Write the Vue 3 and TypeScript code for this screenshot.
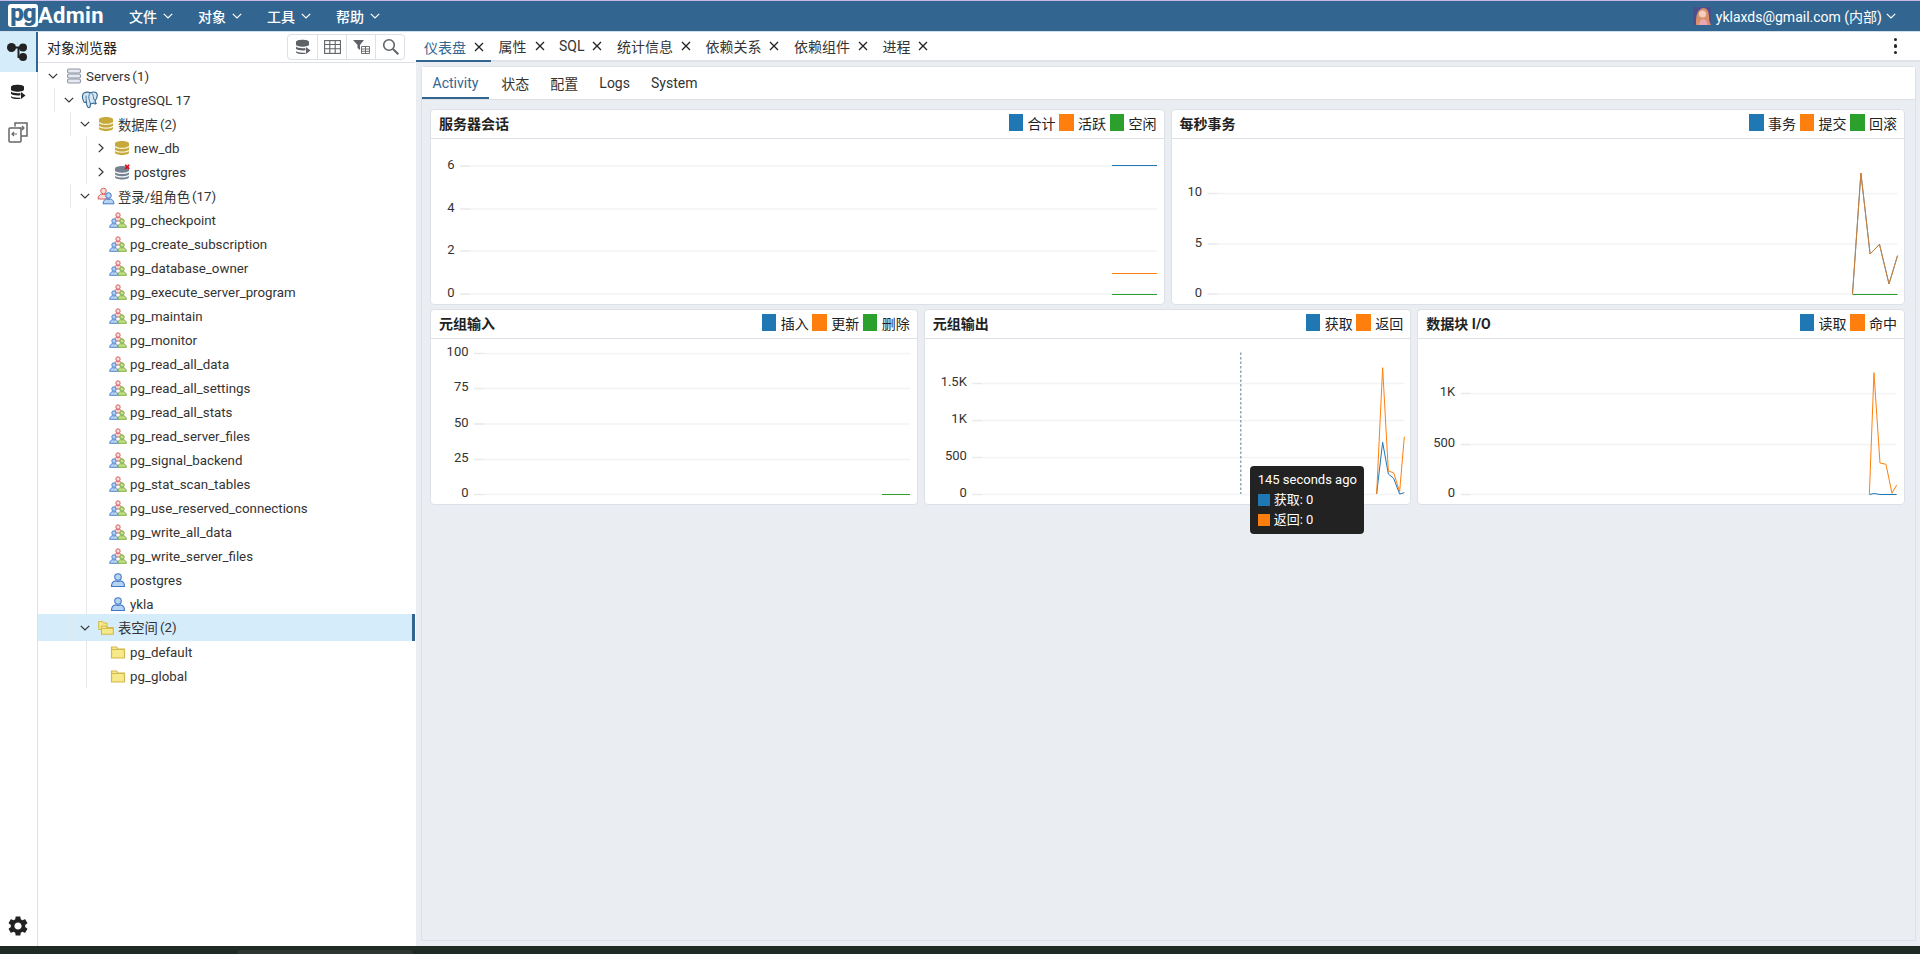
<script setup lang="ts">
interface TreeRow {
  label: string
  count?: number
  depth: number
  icon: string
  open?: boolean
  leaf?: boolean
  selected?: boolean
}

interface Series {
  color: string
  opacity?: number
  points: string
}

interface Chart {
  title: string
  x0: number
  y0: number
  width: number
  axisX: number
  right: number
  legend: { label: string; color: string }[]
  ticks: { label: string; y: number }[]
  series: Series[]
}

const BLUE = '#1f77b4'
const ORANGE = '#ff7f0e'
const GREEN = '#2ca02c'

const roleNames = [
  'pg_checkpoint',
  'pg_create_subscription',
  'pg_database_owner',
  'pg_execute_server_program',
  'pg_maintain',
  'pg_monitor',
  'pg_read_all_data',
  'pg_read_all_settings',
  'pg_read_all_stats',
  'pg_read_server_files',
  'pg_signal_backend',
  'pg_stat_scan_tables',
  'pg_use_reserved_connections',
  'pg_write_all_data',
  'pg_write_server_files',
]

const rows: TreeRow[] = [
  { label: 'Servers', count: 1, depth: 0, icon: 'i-servers', open: true },
  { label: 'PostgreSQL 17', depth: 1, icon: 'i-pg', open: true },
  { label: '数据库', count: 2, depth: 2, icon: 'i-db', open: true },
  { label: 'new_db', depth: 3, icon: 'i-db' },
  { label: 'postgres', depth: 3, icon: 'i-db-off' },
  { label: '登录/组角色', count: 17, depth: 2, icon: 'i-roles', open: true },
  ...roleNames.map((label) => ({ label, depth: 3, icon: 'i-group', leaf: true })),
  { label: 'postgres', depth: 3, icon: 'i-user', leaf: true },
  { label: 'ykla', depth: 3, icon: 'i-user', leaf: true },
  { label: '表空间', count: 2, depth: 2, icon: 'i-folders', open: true, selected: true },
  { label: 'pg_default', depth: 3, icon: 'i-folder', leaf: true },
  { label: 'pg_global', depth: 3, icon: 'i-folder', leaf: true },
]

const wideIcons = ['i-pg', 'i-roles', 'i-group']

const menus = ['文件', '对象', '工具', '帮助']
const tabs = ['仪表盘', '属性', 'SQL', '统计信息', '依赖关系', '依赖组件', '进程']
const subTabs = ['Activity', '状态', '配置', 'Logs', 'System']

const topCharts: Chart[] = [
  {
    title: '服务器会话',
    x0: 431,
    y0: 139,
    width: 732.5,
    axisX: 460,
    right: 1157,
    legend: [
      { label: '合计', color: BLUE },
      { label: '活跃', color: ORANGE },
      { label: '空闲', color: GREEN },
    ],
    ticks: [
      { label: '6', y: 166 },
      { label: '4', y: 209 },
      { label: '2', y: 251 },
      { label: '0', y: 294 },
    ],
    series: [
      { color: BLUE, points: '1112,165.5 1157,165.5' },
      { color: ORANGE, points: '1112,273.5 1157,273.5' },
      { color: GREEN, points: '1112,294.5 1157,294.5' },
    ],
  },
  {
    title: '每秒事务',
    x0: 1171.5,
    y0: 139,
    width: 732.5,
    axisX: 1207,
    right: 1897,
    legend: [
      { label: '事务', color: BLUE },
      { label: '提交', color: ORANGE },
      { label: '回滚', color: GREEN },
    ],
    ticks: [
      { label: '10', y: 193.5 },
      { label: '5', y: 244 },
      { label: '0', y: 294 },
    ],
    series: [
      { color: BLUE, points: '1852,294 1860.4,173 1869.6,254 1879,244.3 1888.5,284 1897,255.7' },
      { color: ORANGE, opacity: 0.8, points: '1852,294 1860.4,173 1869.6,254 1879,244.3 1888.5,284 1897,255.7' },
      { color: GREEN, points: '1852,294.5 1897,294.5' },
    ],
  },
]

const bottomCharts: Chart[] = [
  {
    title: '元组输入',
    x0: 431,
    y0: 339,
    width: 485.67,
    axisX: 474,
    right: 910,
    legend: [
      { label: '插入', color: BLUE },
      { label: '更新', color: ORANGE },
      { label: '删除', color: GREEN },
    ],
    ticks: [
      { label: '100', y: 353.5 },
      { label: '75', y: 388.5 },
      { label: '50', y: 424 },
      { label: '25', y: 459.5 },
      { label: '0', y: 494.5 },
    ],
    series: [{ color: GREEN, points: '882,494.5 910,494.5' }],
  },
  {
    title: '元组输出',
    x0: 924.67,
    y0: 339,
    width: 485.67,
    axisX: 972,
    right: 1404,
    legend: [
      { label: '获取', color: BLUE },
      { label: '返回', color: ORANGE },
    ],
    ticks: [
      { label: '1.5K', y: 383.5 },
      { label: '1K', y: 420.5 },
      { label: '500', y: 457.5 },
      { label: '0', y: 494.5 },
    ],
    series: [
      { color: BLUE, points: '1376.3,494 1382.3,442.3 1388,474 1393.3,478.3 1399.3,494 1404,492.7' },
      { color: ORANGE, points: '1376.3,494 1382.3,367.7 1388,471 1393.3,472.7 1399.3,491.7 1404,436.7' },
    ],
  },
  {
    title: '数据块 I/O',
    x0: 1418.33,
    y0: 339,
    width: 485.67,
    axisX: 1461,
    right: 1897,
    legend: [
      { label: '读取', color: BLUE },
      { label: '命中', color: ORANGE },
    ],
    ticks: [
      { label: '1K', y: 393.5 },
      { label: '500', y: 444.5 },
      { label: '0', y: 494.5 },
    ],
    series: [
      { color: ORANGE, points: '1869.7,494 1874.3,372.7 1880.3,463 1886.3,464.3 1892.3,493.3 1897,485' },
      { color: BLUE, points: '1869.7,494.5 1874.3,493.5 1880.3,494.5 1897,494.5' },
    ],
  },
]

const chartGroups = [topCharts, bottomCharts]
</script>

<template>
  <div class="app">
    <svg class="sprite" aria-hidden="true">
      <defs>
        <symbol id="i-servers" viewBox="0 0 16 16">
          <g fill="#e6e9ef" stroke="#8d95a3" stroke-width="1.1">
            <rect x="1.5" y="1" width="13" height="4" rx="1.6" />
            <rect x="1.5" y="6" width="13" height="4" rx="1.6" />
            <rect x="1.5" y="11" width="13" height="4" rx="1.6" />
          </g>
        </symbol>
        <symbol id="i-pg" viewBox="0 0 16 16">
          <path d="M3 1.5C.8 2.5.8 6.5 2.5 9.5c.7 1.2 1.5.8 2.2 0 .2 2 .6 4.8 2 5.2 1.5.4 1.7-1.7 1.7-3.5 1 .3 2 .1 2.9-.6.6 1 1.5 1 2.2.5-.6-.8-1-1.3-1-2.2 1.9-2.9 2.9-5.5 1.1-7.3C12 .5 9.8 1 8.5 1.5 7 1 4.5.8 3 1.5z" fill="#d7e8f5" stroke="#336791" stroke-width="1" stroke-linejoin="round" />
          <path d="M8.500 1.500C6.800 3 6.500 6 7.500 8.500c.4 1 .6 2 .9 2.700M4.700 9.500c.3-2-.6-3.800-.3-5.500M12.500 8.500c-1-.5-1.500-2-1.500-3.500 0-1-.5-2-1.500-3" fill="none" stroke="#336791" stroke-width=".8" />
        </symbol>
        <symbol id="i-db" viewBox="0 0 16 16">
          <path d="M1 3.500C1 2 4 1 8 1s7 1 7 2.500v9C15 14 12 15 8 15s-7-1-7-2.500z" fill="#c6a93c" />
          <path d="M1 6.300c1 1.300 3.800 2 7 2s6-.7 7-2M1 10.200c1 1.300 3.800 2 7 2s6-.7 7-2" fill="none" stroke="#f8f4dc" stroke-width="1.300" />
        </symbol>
        <symbol id="i-db-off" viewBox="0 0 16 16">
          <path d="M1 4.500C1 3 4 2 8 2s7 1 7 2.500v8.500C15 14.500 12 15.500 8 15.500S1 14.500 1 13z" fill="#76828f" />
          <path d="M1 7.500c1 1.200 3.800 1.900 7 1.900s6-.7 7-1.900M1 11c1 1.200 3.800 1.900 7 1.900s6-.7 7-1.900" fill="none" stroke="#f1f3f5" stroke-width="1.300" />
          <path d="M11.200 .8l4 4M15.200 .8l-4 4" stroke="#d8121e" stroke-width="1.800" />
        </symbol>
        <symbol id="i-user" viewBox="0 0 16 16">
          <g fill="#b7d3f2" stroke="#3f78c9" stroke-width="1.100">
            <circle cx="8" cy="5" r="3.300" />
            <path d="M1.500 14.500c0-3.600 2.500-5.300 4-5.600.8.600 4.200.6 5 0 1.500.3 4 2 4 5.600z" />
          </g>
        </symbol>
        <symbol id="i-roles" viewBox="0 0 18 18">
          <g fill="#f7dede" stroke="#d9615c" stroke-width="1">
            <circle cx="6.500" cy="4" r="2.800" />
            <path d="M1 12c0-3 2-4.500 3.300-4.800.7.500 3.700.5 4.400 0C10 7.500 12 9 12 12z" />
          </g>
          <g fill="#b7d3f2" stroke="#3f78c9" stroke-width="1">
            <circle cx="11.500" cy="8.500" r="2.800" />
            <path d="M6 16.800c0-3 2-4.500 3.300-4.800.7.500 3.700.5 4.400 0 1.300.3 3.300 1.800 3.300 4.800z" />
          </g>
        </symbol>
        <symbol id="i-group" viewBox="0 0 18 16">
          <g fill="#f7dede" stroke="#d9514c" stroke-width=".9">
            <circle cx="9" cy="3" r="2.200" />
            <path d="M5 9c0-2 1.300-3.300 2.400-3.500.6.400 2.600.4 3.200 0C11.700 5.700 13 7 13 9z" />
          </g>
          <g fill="#b7d3f2" stroke="#3f78c9" stroke-width=".9">
            <circle cx="5" cy="9" r="2.200" />
            <path d="M.7 15.300c0-2 1.500-3.400 2.700-3.600.6.400 2.600.4 3.200 0 1.200.2 2.700 1.600 2.700 3.600z" />
          </g>
          <g fill="#c4e08a" stroke="#6fa52c" stroke-width=".9">
            <circle cx="13" cy="9" r="2.200" />
            <path d="M8.700 15.300c0-2 1.500-3.400 2.700-3.600.6.400 2.600.4 3.200 0 1.200.2 2.700 1.600 2.700 3.600z" />
          </g>
        </symbol>
        <symbol id="i-folder" viewBox="0 0 16 16">
          <path d="M1.500 3h5l1.500 2h6.500v9h-13z" fill="#f6e98a" stroke="#d3b84a" stroke-width="1.200" stroke-linejoin="round" />
          <path d="M1.500 5.500h13" stroke="#d3b84a" stroke-width="1" />
        </symbol>
        <symbol id="i-folders" viewBox="0 0 16 16">
          <path d="M.7 1.500h3.800l1 1.500h3.500v6.500H.7z" fill="#f6e98a" stroke="#d3b84a" stroke-width="1" stroke-linejoin="round" />
          <path d="M3.500 6h4.200l1 1.500h6.600v6.800H3.500z" fill="#f6e98a" stroke="#d3b84a" stroke-width="1.100" stroke-linejoin="round" />
          <path d="M3.500 8.500h11.800" stroke="#d3b84a" stroke-width=".9" />
        </symbol>
        <symbol id="i-chevron" viewBox="0 0 10 10">
          <path d="M.8 2.800L5 7l4.200-4.200" fill="none" stroke="currentColor" stroke-width="1.200" />
        </symbol>
        <symbol id="i-close" viewBox="0 0 10 10">
          <path d="M1 1l8 8M9 1l-8 8" fill="none" stroke="currentColor" stroke-width="1.300" />
        </symbol>
        <symbol id="i-db-query" viewBox="0 0 16 16">
          <path d="M1 3C1 1.700 4 .8 7.500 .8S14 1.700 14 3v2.500C14 6.800 11 7.700 7.500 7.700S1 6.800 1 5.500z" />
          <path d="M1 7.500c.8 1 3.500 1.700 6.500 1.700 1 0 2-.1 2.900-.2v2.300c-1 .2-1.900.2-2.900.2-3 0-5.700-.7-6.500-1.700z" />
          <path d="M1 12c.8 1 3.500 1.700 6.500 1.700h2.900v1.200c-1 .2-1.900.2-2.900.2-3.500 0-6.500-1-6.500-2.200z" />
          <path d="M11 8l4.500 3.500L11 15z" />
        </symbol>
      </defs>
    </svg>

    <header class="navbar">
      <div class="logo"><span class="logo-pg">pg</span><span class="logo-admin">Admin</span></div>
      <nav class="menus">
        <span v-for="m in menus" :key="m" class="menu">
          {{ m }}
          <svg class="menu-chevron"><use href="#i-chevron" /></svg>
        </span>
      </nav>
      <div class="user">
        <svg class="avatar" viewBox="0 0 18 18">
          <rect width="18" height="18" fill="#4b4f8c" />
          <path d="M3 18c0-7 0-15 7-17 5 0 6 5 6 9s1 6 2 8z" fill="#d98f6a" />
          <circle cx="9.500" cy="7" r="3.600" fill="#f4cdbd" />
          <path d="M6 18c.5-4 2-6 4-6s4 2 4.500 6z" fill="#e9a6b4" />
        </svg>
        <span>yklaxds@gmail.com (内部)</span>
        <svg class="menu-chevron"><use href="#i-chevron" /></svg>
      </div>
    </header>

    <div class="workspace">
      <aside class="sidebar">
        <button class="side-btn active" type="button">
          <svg width="20" height="18" viewBox="0 0 20 18" fill="#222">
            <circle cx="4.500" cy="4.500" r="4.500" />
            <circle cx="16" cy="4.500" r="4" />
            <circle cx="16" cy="14" r="4" />
            <path d="M4 3.500h12v2h-3.500v7.500H16v2h-5.500v-9.500H4z" />
          </svg>
        </button>
        <button class="side-btn" type="button">
          <svg width="16" height="16" fill="#222"><use href="#i-db-query" /></svg>
        </button>
        <button class="side-btn" type="button">
          <svg width="20" height="22" viewBox="0 0 20 22" fill="none" stroke="#666" stroke-width="1.500">
            <path d="M7 5.500V2h12v13h-6" />
            <rect x="1" y="7" width="12" height="14" rx="1" />
            <path d="M9 13H4m2-2l-2 2 2 2M11 7h5m-2-2l2 2-2 2" stroke-width="1.200" />
          </svg>
        </button>
        <svg class="gear" viewBox="0 0 24 24" fill="#222">
          <path d="M19.140 12.940c.04-.3.06-.61.06-.94 0-.32-.02-.64-.07-.94l2.030-1.580c.18-.14.23-.41.12-.61l-1.920-3.320c-.12-.22-.37-.29-.59-.22l-2.390.96c-.5-.38-1.030-.7-1.620-.94l-.36-2.540c-.04-.24-.24-.41-.48-.41h-3.840c-.24 0-.43.17-.47.41l-.36 2.540c-.59.24-1.130.57-1.620.94l-2.390-.96c-.22-.08-.47 0-.59.22L2.740 8.870c-.12.21-.08.47.12.61l2.030 1.580c-.05.3-.09.63-.09.94s.02.64.07.94l-2.030 1.580c-.18.14-.23.41-.12.61l1.920 3.320c.12.22.37.29.59.22l2.390-.96c.5.38 1.030.7 1.620.94l.36 2.540c.05.24.24.41.48.41h3.840c.24 0 .44-.17.47-.41l.36-2.540c.59-.24 1.130-.56 1.620-.94l2.390.96c.22.08.47 0 .59-.22l1.920-3.320c.12-.22.07-.47-.12-.61l-2.010-1.580zM12 15.600c-1.980 0-3.600-1.620-3.600-3.600s1.620-3.600 3.600-3.600 3.600 1.620 3.600 3.600-1.620 3.600-3.600 3.600z" />
        </svg>
      </aside>

      <section class="explorer">
        <div class="explorer-head">
          <span>对象浏览器</span>
          <div class="tool-group">
            <button class="tool" type="button">
              <svg width="16" height="16" fill="#5f6368"><use href="#i-db-query" /></svg>
            </button>
            <button class="tool" type="button">
              <svg width="17" height="14" viewBox="0 0 17 14" fill="none" stroke="#5f6368" stroke-width="1.100">
                <rect x=".6" y=".6" width="15.800" height="12.800" />
                <path d="M.6 4.500h15.800M.6 8.800h15.800M5.800.6v12.800M11.200.6v12.800" />
              </svg>
            </button>
            <button class="tool" type="button">
              <svg width="17" height="14" viewBox="0 0 17 14">
                <path d="M0 0h11L7 5v5L4.500 8V5z" fill="#5f6368" />
                <path d="M8.500 6.500H16.500V13.500H8.500zM8.500 9h8M8.500 11.300h8M12.500 6.500v7" fill="none" stroke="#5f6368" stroke-width=".9" />
              </svg>
            </button>
            <button class="tool" type="button">
              <svg width="17" height="17" viewBox="0 0 17 17" fill="none" stroke="#5f6368" stroke-width="1.600">
                <circle cx="7" cy="7" r="5.300" />
                <path d="M11 11l5.300 5.300" stroke-width="2" />
              </svg>
            </button>
          </div>
        </div>
        <div class="tree">
          <div
            v-for="(row, i) in rows"
            :key="i"
            class="tree-row"
            :class="{ selected: row.selected }"
            :style="{ paddingLeft: 8 + row.depth * 16 + 'px' }"
          >
            <span v-if="row.depth" class="guide" :style="{ left: row.depth * 16 + 'px' }"></span>
            <span class="toggle" :class="{ leaf: row.leaf }">
              <svg v-if="!row.leaf" class="chevron" :class="{ closed: !row.open }"><use href="#i-chevron" /></svg>
            </span>
            <svg class="tree-icon" :class="{ wide: wideIcons.includes(row.icon) }"><use :href="'#' + row.icon" /></svg>
            <span class="tree-label">{{ row.label }}</span>
            <span v-if="row.count !== undefined" class="tree-count">({{ row.count }})</span>
          </div>
        </div>
      </section>

      <main class="content">
        <div class="tabbar">
          <div v-for="(t, i) in tabs" :key="t" class="tab" :class="{ active: i === 0 }">
            <span>{{ t }}</span>
            <svg class="tab-close"><use href="#i-close" /></svg>
          </div>
          <div class="kebab"><i></i><i></i><i></i></div>
        </div>
        <div class="pane">
          <div class="panel">
            <div class="subtabs">
              <span v-for="(t, i) in subTabs" :key="t" class="subtab" :class="{ active: i === 0 }">{{ t }}</span>
            </div>
            <div class="dashboard">
              <div v-for="(group, g) in chartGroups" :key="g" class="chart-row">
                <div v-for="c in group" :key="c.title" class="card">
                  <div class="card-head">
                    <span class="card-title">{{ c.title }}</span>
                    <div class="legend">
                      <template v-for="l in c.legend" :key="l.label">
                        <i class="swatch" :style="{ background: l.color }"></i>
                        <span class="legend-label">{{ l.label }}</span>
                      </template>
                    </div>
                  </div>
                  <svg class="plot" :viewBox="`${c.x0} ${c.y0} ${c.width} 165`" preserveAspectRatio="xMinYMin">
                    <template v-for="t in c.ticks" :key="t.label">
                      <text class="axis-label" :x="c.axisX - 5.5" :y="t.y + 2.5" text-anchor="end">{{ t.label }}</text>
                      <line :x1="c.axisX" :x2="c.axisX + 10" :y1="t.y" :y2="t.y" stroke="#e8e9eb" stroke-width="1.5" />
                      <line :x1="c.axisX + 10" :x2="c.right" :y1="t.y" :y2="t.y" stroke="#f2f3f5" stroke-width="1.5" />
                    </template>
                    <polyline
                      v-for="(s, si) in c.series"
                      :key="si"
                      :points="s.points"
                      fill="none"
                      :stroke="s.color"
                      :stroke-opacity="s.opacity ?? 1"
                      stroke-width="1"
                    />
                    <line
                      v-if="c.title === '元组输出'"
                      x1="1240.5"
                      x2="1240.5"
                      y1="352.5"
                      y2="494"
                      stroke="#607d8b"
                      stroke-dasharray="2.5 2"
                    />
                  </svg>
                  <div v-if="c.title === '元组输出'" class="tooltip">
                    <div>145 seconds ago</div>
                    <div class="tip-row"><i class="tip-swatch blue"></i>获取: 0</div>
                    <div class="tip-row"><i class="tip-swatch orange"></i>返回: 0</div>
                  </div>
                </div>
              </div>
            </div>
          </div>
        </div>
      </main>
    </div>
    <footer class="taskbar"><span class="task-pill"></span></footer>
  </div>
</template>

<style>
html,
body {
  margin: 0;
  overflow: hidden;
}
</style>

<style scoped>
.app {
  display: flex;
  flex-direction: column;
  height: 954px;
  font-family: Roboto, "Noto Sans CJK SC", sans-serif;
  font-size: 14px;
  color: #222;
  background: #fff;
}

.sprite {
  position: absolute;
  width: 0;
  height: 0;
}

.navbar {
  display: flex;
  align-items: center;
  flex: 0 0 32px;
  box-sizing: border-box;
  height: 32px;
  padding: 0 24px 1px 8px;
  border-top: 1px solid #c7b8e6;
  border-bottom: 1px solid #cfe0ec;
  background: #326690;
  color: #fff;
}

.logo {
  display: flex;
  align-items: center;
  width: 121px;
  font-weight: 700;
}

.logo-pg {
  width: 30px;
  height: 23px;
  border-radius: 3px;
  background: #fff;
  color: #326690;
  font-size: 24px;
  font-weight: 900;
  line-height: 19px;
  letter-spacing: -1px;
  text-align: center;
}

.logo-admin {
  font-size: 22px;
  letter-spacing: .3px;
}

.menus {
  display: flex;
}

.menu {
  display: flex;
  align-items: center;
  gap: 6px;
  width: 69px;
  font-weight: 500;
}

.menu-chevron {
  width: 10px;
  height: 10px;
  color: #fff;
}

.user {
  display: flex;
  align-items: center;
  margin-left: auto;
  gap: 4px;
}

.avatar {
  width: 18px;
  height: 18px;
  margin-right: 1px;
}

.workspace {
  display: flex;
  flex: 1;
  min-height: 0;
}

.sidebar {
  display: flex;
  flex: 0 0 38px;
  flex-direction: column;
  box-sizing: border-box;
  border-right: 1px solid #dde0e6;
}

.side-btn {
  display: flex;
  align-items: center;
  justify-content: center;
  height: 40px;
  padding: 0 2px 0 0;
  border: 0;
  background: none;
}

.side-btn.active {
  border-right: 2px solid #326690;
  margin-right: -1px;
  background: #d5ecfa;
}

.gear {
  width: 24px;
  height: 24px;
  margin: auto 0 8px 6px;
}

.explorer {
  display: flex;
  flex: 0 0 377px;
  flex-direction: column;
  min-width: 0;
}

.explorer-head {
  display: flex;
  align-items: center;
  justify-content: space-between;
  box-sizing: border-box;
  height: 31px;
  padding: 0 10px 1px 9px;
  border-bottom: 1px solid #dde0e6;
}

.tool-group {
  display: flex;
  height: 24px;
  border: 1px solid #dde0e6;
  border-radius: 4px;
}

.tool {
  display: flex;
  align-items: center;
  justify-content: center;
  width: 29px;
  padding: 0;
  border: 0;
  border-left: 1px solid #dde0e6;
  background: none;
}

.tool:first-child {
  border-left: 0;
}

.tree {
  padding-top: 1px;
  color: #333;
  font-size: 13.3px;
}

.tree-row {
  position: relative;
  display: flex;
  align-items: center;
  height: 24px;
}

.tree-row.selected {
  height: 27px;
  margin: -2px 0 -1px;
  box-sizing: border-box;
  border-right: 3px solid #326690;
  background: #d5ecfa;
}

.guide {
  position: absolute;
  top: 0;
  bottom: 0;
  width: 1px;
  background: #e4e6ea;
}

.toggle {
  display: flex;
  flex: 0 0 20px;
}

.toggle.leaf {
  flex-basis: 16px;
}

.chevron {
  width: 10px;
  height: 10px;
  margin-left: 2px;
  color: #333;
}

.chevron.closed {
  transform: rotate(-90deg);
}

.tree-icon {
  flex: 0 0 16px;
  width: 16px;
  height: 16px;
  margin-right: 4px;
  overflow: visible;
}

.tree-icon.wide {
  flex-basis: 18px;
  width: 18px;
  height: 18px;
  margin: 0 3px 0 -1px;
}

.tree-count {
  margin-left: 2px;
}

.content {
  display: flex;
  flex: 1;
  flex-direction: column;
  min-width: 0;
  margin-left: 1px;
  background: #eaedf2;
}

.tabbar {
  display: flex;
  flex: 0 0 30px;
  align-items: stretch;
  box-sizing: border-box;
  background: #fff;
  border-bottom: 2px solid #dfe3e8;
}

.tab {
  display: flex;
  align-items: center;
  gap: 8px;
  padding: 0 6.5px 0 8px;
  color: #333;
}

.tab.active {
  box-shadow: inset 0 -2px 0 #326690;
  margin-bottom: -2px;
  color: #326690;
}

.tab-close {
  width: 10px;
  height: 10px;
  color: #222;
}

.kebab {
  display: flex;
  flex-direction: column;
  align-items: center;
  justify-content: center;
  gap: 3px;
  margin-left: auto;
  padding-right: 23px;
}

.kebab i {
  width: 3.5px;
  height: 3.5px;
  border-radius: 50%;
  background: #222;
}

.pane {
  display: flex;
  flex: 1;
  min-height: 0;
  padding: 4px 4px 5px 5px;
}

.panel {
  display: flex;
  flex: 1;
  flex-direction: column;
  min-width: 0;
  border: 1px solid #dde0e6;
  border-radius: 4px 4px 0 0;
}

.subtabs {
  display: flex;
  flex: 0 0 32px;
  box-sizing: border-box;
  background: #fff;
  border-bottom: 1px solid #dde0e6;
}

.subtab {
  display: flex;
  align-items: center;
  padding: 0 10.5px;
  color: #333;
}

.subtab.active {
  box-sizing: border-box;
  height: 32px;
  margin-right: 2px;
  box-shadow: inset 0 -2px 0 #326690;
  color: #326690;
}

.dashboard {
  display: flex;
  flex-direction: column;
  gap: 4px;
  padding: 9px 10px 0 8px;
}

.chart-row {
  display: flex;
  gap: 6px;
}

.card {
  position: relative;
  flex: 1 1 0;
  box-sizing: border-box;
  min-width: 0;
  height: 196px;
  border: 1px solid #dde0e6;
  border-radius: 4px;
  background: #fff;
}

.card-head {
  display: flex;
  align-items: center;
  justify-content: space-between;
  box-sizing: border-box;
  height: 29px;
  padding: 0 7px 3px 8px;
  border-bottom: 1px solid #dde0e6;
}

.card-title {
  font-weight: 700;
}

.legend {
  display: flex;
  align-items: center;
}

.swatch {
  width: 14.5px;
  height: 17px;
  margin-right: 4.5px;
}

.legend-label {
  margin-right: 3.5px;
}

.legend-label:last-child {
  margin-right: 0;
}

.plot {
  display: block;
  width: 100%;
  height: 165px;
  overflow: visible;
}

.axis-label {
  font-size: 13px;
  fill: #333;
}

.tooltip {
  position: absolute;
  z-index: 2;
  top: 156px;
  left: 325px;
  box-sizing: border-box;
  width: 114px;
  height: 68px;
  padding: 4px 8px;
  border-radius: 4px;
  background: #222;
  color: #fff;
  font-size: 13px;
  line-height: 20px;
  white-space: nowrap;
}

.tip-row {
  display: flex;
  align-items: center;
}

.tip-swatch {
  width: 12px;
  height: 12px;
  margin-right: 4px;
}

.tip-swatch.blue {
  background: #1f77b4;
}

.tip-swatch.orange {
  background: #ff7f0e;
}

.taskbar {
  position: relative;
  flex: 0 0 8px;
  background: #1f2a24;
}

.task-pill {
  position: absolute;
  top: 4px;
  bottom: 0;
  left: 237px;
  width: 176px;
  border-radius: 4px 4px 0 0;
  background: #2c3530;
}
</style>
